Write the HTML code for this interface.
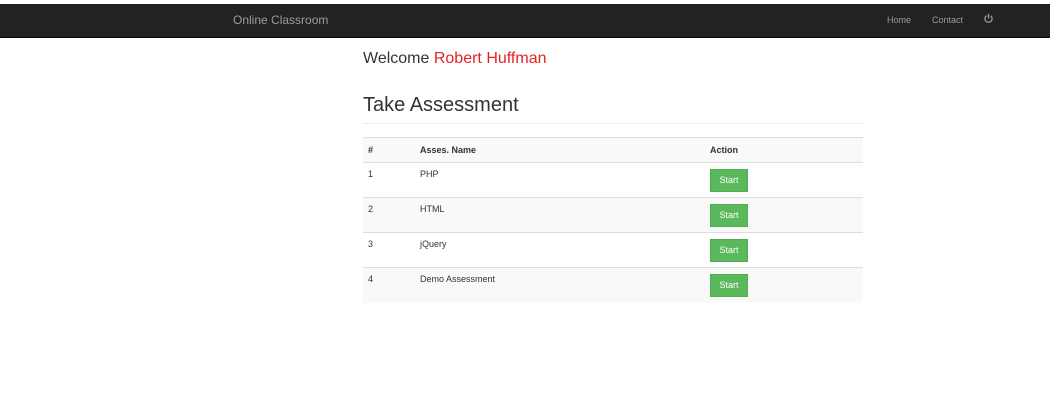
<!DOCTYPE html>
<html><head><style>
*{margin:0;padding:0;box-sizing:border-box}
body{width:1050px;height:400px;background:#fff;font-family:"Liberation Sans",sans-serif;position:relative;overflow:hidden}
.nav{position:absolute;top:4px;left:0;width:1050px;height:34px;background:#222;border-bottom:1px solid #080808}
.brand{position:absolute;left:233px;top:9px;font-size:12px;color:#9d9d9d}
.nl{position:absolute;top:11px;font-size:9px;color:#9d9d9d}
.t{position:absolute;white-space:nowrap}
table{position:absolute;left:363px;top:137px;width:500px;border-collapse:collapse;font-size:9px;color:#333}
td,th{text-align:left;vertical-align:top;border-top:1px solid #ddd;padding:0 5px}
th{height:25px;vertical-align:middle;font-weight:bold;background:#f9f9f9;border-bottom:1px solid #ddd}
td{height:35px;padding-top:6px}
tr.s td{background:#f9f9f9}
.btn{display:inline-block;width:38px;height:23px;background:#5cb85c;border:1px solid #4cae4c;color:#fff;font-size:9px;text-align:center;line-height:21px;margin-top:0}
</style></head><body>
<div class="nav">
<div class="brand">Online Classroom</div>
<div class="nl" style="left:887px">Home</div>
<div class="nl" style="left:932px">Contact</div>
<svg style="position:absolute;left:983px;top:9px" width="11" height="11" viewBox="0 0 10 10"><path d="M3 2.5A3.3 3.3 0 1 0 7 2.5" fill="none" stroke="#9d9d9d" stroke-width="1.2"/><path d="M5 0.8V5" stroke="#9d9d9d" stroke-width="1.2"/></svg>
</div>
<div class="t" style="left:363px;top:50px;font-size:16px;color:#333">Welcome <span style="color:#e32222">Robert Huffman</span></div>
<div class="t" style="left:363px;top:94px;font-size:20px;color:#333">Take Assessment</div>
<div style="position:absolute;left:363px;top:123px;width:500px;border-top:1px solid #eee"></div>
<table>
<tr><th style="width:52px">#</th><th style="width:290px">Asses. Name</th><th>Action</th></tr>
<tr><td>1</td><td>PHP</td><td><span class="btn">Start</span></td></tr>
<tr class="s"><td>2</td><td>HTML</td><td><span class="btn">Start</span></td></tr>
<tr><td>3</td><td>jQuery</td><td><span class="btn">Start</span></td></tr>
<tr class="s"><td>4</td><td>Demo Assessment</td><td><span class="btn">Start</span></td></tr>
</table>
</body></html>
